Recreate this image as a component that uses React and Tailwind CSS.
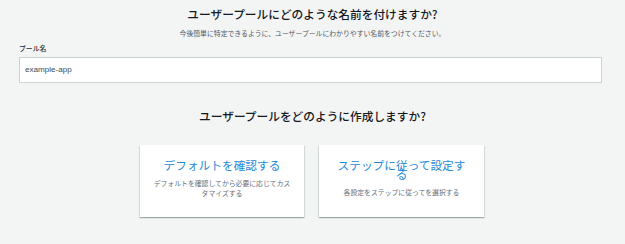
export default function App() {
  const jp = { fontFamily: '"Noto Sans CJK JP", "Noto Sans", sans-serif' };
  return (
    <div className="w-[625px] h-[244px] bg-[#f3f4f4] flex flex-col items-stretch" style={jp}>
      <h1 className="mt-[7px] text-center text-[11.7px] leading-[14px] text-[#16191f] font-medium">
        ユーザープールにどのような名前を付けますか?
      </h1>
      <p className="mt-[8px] text-center text-[6.85px] leading-[9px] text-[#545b64]">
        今後簡単に特定できるように、ユーザープールにわかりやすい名前をつけてください。
      </p>
      <div className="ml-[19px] w-[583px] mt-[6px] flex flex-col">
        <label className="text-[6.85px] leading-[9px] text-[#2a2f36] font-medium">プール名</label>
        <div className="mt-[4px] h-[26px] bg-white border border-[#cdd2d2] flex items-center px-[5px]">
          <span className="text-[8.1px] text-[#444b52]" style={{ fontFamily: '"Liberation Sans", Arial, sans-serif' }}>
            example-app
          </span>
        </div>
      </div>
      <h2 className="mt-[26px] text-center text-[11.7px] leading-[14px] text-[#16191f] font-medium">
        ユーザープールをどのように作成しますか?
      </h2>
      <div className="mt-[22px] flex justify-center gap-[15px] pr-[1px]">
        <div className="w-[164px] h-[72px] bg-white px-[13px] pt-[14px] flex flex-col items-center text-center shadow-[0_1px_1px_0_rgba(0,28,36,0.2),1px_1px_1px_0_rgba(0,28,36,0.1),-1px_1px_1px_0_rgba(0,28,36,0.1)]">
          <div className="text-[11.7px] leading-[9px] text-[#1f8ad8] py-[1px]">デフォルトを確認する</div>
          <div className="mt-[9px] text-[6.85px] leading-[9.5px] text-[#687078]">
            デフォルトを確認してから必要に応じてカスタマイズする
          </div>
        </div>
        <div className="w-[165px] h-[72px] bg-white px-[13px] pt-[14px] flex flex-col items-center text-center shadow-[0_1px_1px_0_rgba(0,28,36,0.2),1px_1px_1px_0_rgba(0,28,36,0.1),-1px_1px_1px_0_rgba(0,28,36,0.1)]">
          <div className="text-[11.7px] leading-[9px] text-[#1f8ad8] py-[1px]">ステップに従って設定する</div>
          <div className="mt-[9px] text-[6.85px] leading-[9.5px] text-[#687078]">
            各設定をステップに従ってを選択する
          </div>
        </div>
      </div>
    </div>
  );
}
